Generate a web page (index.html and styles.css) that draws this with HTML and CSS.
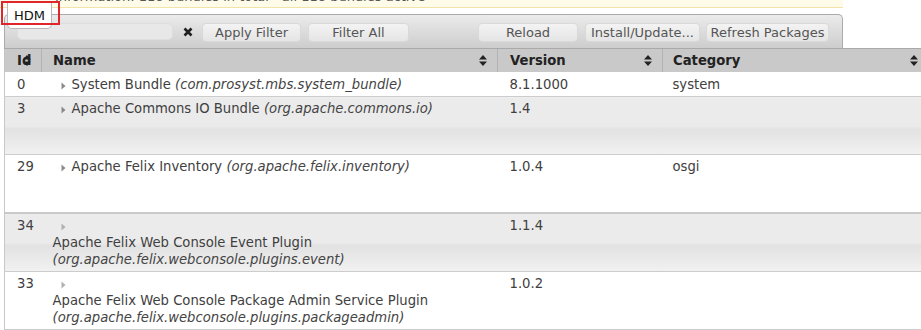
FILE: index.html
```html
<!DOCTYPE html>
<html lang="en">
<head>
    <meta charset="UTF-8">
    <title>Bundles</title>
    <link rel="stylesheet" href="styles.css">
</head>
<body>
    <div class="status-line">
        <p>Information: 118 bundles in total - all 118 bundles active</p>
    </div>

    <!-- tab label with the red highlight frame over it -->
    <div class="tab-label">HDM</div>
    <div class="highlight"></div>

    <div class="toolbar">
        <input type="text" class="filter-input">
        <span class="clear-filter">
            <svg width="10" height="10" viewBox="0 0 10 10"><path d="M1.5 1.5 L8.5 8.5 M8.5 1.5 L1.5 8.5" stroke="#1e1e1e" stroke-width="2.6"/></svg>
        </span>
        <button class="btn btn-apply">Apply Filter</button>
        <button class="btn btn-all">Filter All</button>
        <div class="toolbar-right">
            <button class="btn btn-reload">Reload</button>
            <button class="btn btn-install">Install/Update...</button>
            <button class="btn btn-refresh">Refresh Packages</button>
        </div>
    </div>

    <div class="grid-wrap">
        <table class="bundles">
            <colgroup>
                <col class="c-id">
                <col class="c-name">
                <col class="c-version">
                <col class="c-category">
            </colgroup>
            <thead>
                <tr>
                    <th class="col-id">Id<svg class="sort" width="8" height="11" viewBox="0 0 8 11"><path d="M4 0 L8 4.5 L0 4.5 Z M0 6.5 L8 6.5 L4 11 Z" fill="#222"/></svg></th>
                    <th class="col-name">Name<svg class="sort" width="8" height="11" viewBox="0 0 8 11"><path d="M4 0 L8 4.5 L0 4.5 Z M0 6.5 L8 6.5 L4 11 Z" fill="#222"/></svg></th>
                    <th class="col-version">Version<svg class="sort" width="8" height="11" viewBox="0 0 8 11"><path d="M4 0 L8 4.5 L0 4.5 Z M0 6.5 L8 6.5 L4 11 Z" fill="#222"/></svg></th>
                    <th class="col-category">Category<svg class="sort" width="8" height="11" viewBox="0 0 8 11"><path d="M4 0 L8 4.5 L0 4.5 Z M0 6.5 L8 6.5 L4 11 Z" fill="#222"/></svg></th>
                </tr>
            </thead>
            <tbody>
                <tr class="row-short">
                    <td class="col-id">0</td>
                    <td class="col-name"><svg class="arrow" width="5" height="8" viewBox="0 0 5 8"><path d="M0.5 0.5 L4.5 4 L0.5 7.5 Z" fill="#8a8a8a"/></svg><span class="title">System Bundle <i>(com.prosyst.mbs.system_bundle)</i></span></td>
                    <td class="col-version">8.1.1000</td>
                    <td class="col-category">system</td>
                </tr>
                <tr class="odd">
                    <td class="col-id">3</td>
                    <td class="col-name"><svg class="arrow" width="5" height="8" viewBox="0 0 5 8"><path d="M0.5 0.5 L4.5 4 L0.5 7.5 Z" fill="#8a8a8a"/></svg><span class="title">Apache Commons IO Bundle <i>(org.apache.commons.io)</i></span></td>
                    <td class="col-version">1.4</td>
                    <td class="col-category"></td>
                </tr>
                <tr class="thick">
                    <td class="col-id">29</td>
                    <td class="col-name"><svg class="arrow" width="5" height="8" viewBox="0 0 5 8"><path d="M0.5 0.5 L4.5 4 L0.5 7.5 Z" fill="#8a8a8a"/></svg><span class="title">Apache Felix Inventory <i>(org.apache.felix.inventory)</i></span></td>
                    <td class="col-version">1.0.4</td>
                    <td class="col-category">osgi</td>
                </tr>
                <tr class="odd">
                    <td class="col-id">34</td>
                    <td class="col-name"><svg class="arrow" width="5" height="8" viewBox="0 0 5 8"><path d="M0.5 0.5 L4.5 4 L0.5 7.5 Z" fill="#b0b0b0"/></svg><span class="title">Apache Felix Web Console Event Plugin <i>(org.apache.felix.webconsole.plugins.event)</i></span></td>
                    <td class="col-version">1.1.4</td>
                    <td class="col-category"></td>
                </tr>
                <tr>
                    <td class="col-id">33</td>
                    <td class="col-name"><svg class="arrow" width="5" height="8" viewBox="0 0 5 8"><path d="M0.5 0.5 L4.5 4 L0.5 7.5 Z" fill="#b0b0b0"/></svg><span class="title">Apache Felix Web Console Package Admin Service Plugin <i>(org.apache.felix.webconsole.plugins.packageadmin)</i></span></td>
                    <td class="col-version">1.0.2</td>
                    <td class="col-category"></td>
                </tr>
            </tbody>
        </table>
    </div>
</body>
</html>
```

FILE: styles.css
```css
body {
    font-family: 'DejaVu Sans', Verdana, sans-serif;
    font-size: 13px;
    color: #404040;
    background-color: #ffffff;
    margin: 0;
    padding: 0;
    position: relative;
    overflow: hidden;
}

.status-line {
    width: 843px;
    height: 7px;
    background-color: #fffbe9;
    border-bottom: 1px solid #f2e4a8;
    overflow: hidden;
}

.status-line p {
    margin: -11px 0 0 55px;
    line-height: 16px;
    color: #555;
}

.tab-label {
    position: absolute;
    left: 7px;
    top: 3px;
    width: 45px;
    height: 26px;
    box-sizing: border-box;
    padding-top: 5px;
    text-align: center;
    color: #111;
    background-color: #ffffff;
    border: 1px solid #b8b8b8;
    border-top: none;
    border-radius: 0 0 5px 5px;
}

.highlight {
    position: absolute;
    left: 1px;
    top: 1px;
    width: 59px;
    height: 24px;
    box-sizing: border-box;
    border: 2px solid #e0262b;
}

.toolbar {
    display: flex;
    align-items: flex-start;
    width: 839px;
    height: 34px;
    box-sizing: border-box;
    margin: 6px 0 0 4px;
    padding: 8px 13px 0 12px;
    background: linear-gradient(to bottom, #ebebeb, #cdcdcd);
    border: 1px solid #ababab;
    border-bottom: none;
    border-radius: 5px 5px 0 0;
}

.filter-input {
    width: 156px;
    height: 17px;
    box-sizing: border-box;
    margin: 0;
    padding: 0;
    background-color: #e8e8e8;
    border: 1px solid #dedede;
    border-radius: 5px;
}

.clear-filter {
    display: flex;
    margin: 4px 0 0 10px;
}

.btn {
    height: 19px;
    box-sizing: border-box;
    margin: 0 0 0 7px;
    padding: 0 2px;
    font-family: 'DejaVu Sans', Verdana, sans-serif;
    font-size: 13px;
    line-height: 16px;
    color: #555555;
    background: linear-gradient(to bottom, #f3f3f3, #e5e5e5);
    border: 1px solid #d9d9d9;
    border-radius: 4px;
    white-space: nowrap;
}

.btn-apply {
    width: 99px;
    margin-left: 9px;
}

.btn-all {
    width: 101px;
}

.btn-reload {
    width: 100px;
}

.btn-install {
    width: 115px;
}

.btn-refresh {
    width: 123px;
    margin-left: 6px;
}

.toolbar-right {
    display: flex;
    margin-left: auto;
}

.grid-wrap {
    margin-left: 4px;
    overflow: hidden;
}

.bundles {
    width: 923px;
    table-layout: fixed;
    border-collapse: collapse;
    font-size: 13.2px;
}

.c-id { width: 37px; }
.c-name { width: 456px; }
.c-version { width: 165px; }
.c-category { width: 265px; }

.bundles th {
    position: relative;
    height: 23px;
    padding: 0;
    text-align: left;
    font-weight: bold;
    color: #222222;
    background-color: #c9c9c9;
    border-top: 1px solid #a9a9a9;
    border-left: 1px solid #b3b3b3;
}

.bundles th:first-child {
    border-left: 1px solid #c4c4c4;
}

.sort {
    position: absolute;
    right: 10px;
    top: 6px;
}

.bundles td {
    padding: 3px 0 0;
    vertical-align: top;
    line-height: 17px;
    height: 54px;
    border-bottom: 1px solid #cccccc;
}

.bundles td:first-child {
    border-left: 1px solid #c8c8c8;
}

.bundles tr.row-short td {
    padding-top: 4px;
    height: 20px;
}

.bundles tr.odd td {
    background: linear-gradient(to bottom, #ebebeb 0, #ebebeb 50%, #e2e2e2 56%, #f1f1f1 100%);
}

.bundles tr.thick td {
    border-bottom: 2px solid #c9c9c9;
}

.col-id { padding-left: 12px !important; }
.col-name { padding-left: 11px !important; }
.col-version { padding-left: 12px !important; }
.col-category { padding-left: 10px !important; }

.arrow {
    margin: 0 6px 0 8px;
    vertical-align: -1px;
}

.title {
    display: inline-block;
    vertical-align: top;
}

.title i {
    color: #444;
}
```
